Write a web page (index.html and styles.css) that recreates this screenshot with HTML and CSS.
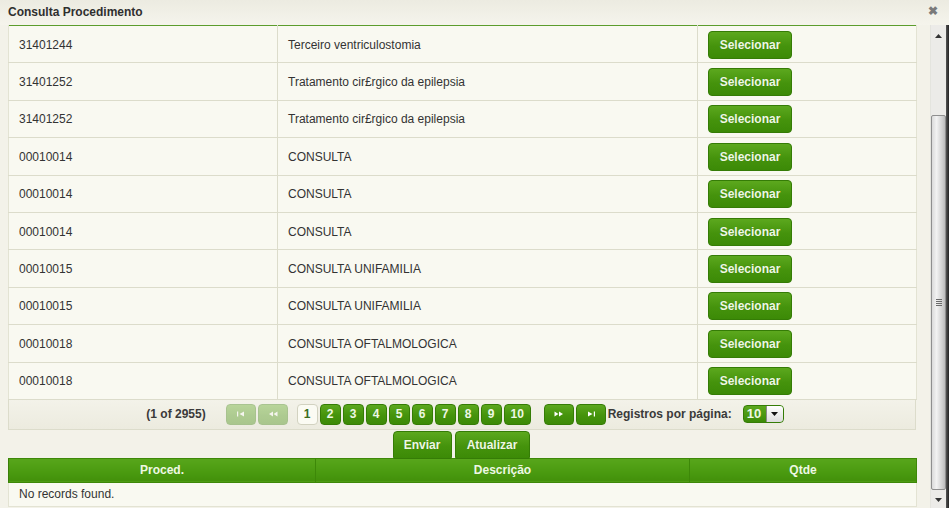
FILE: index.html
```html
<!DOCTYPE html>
<html lang="pt">
<head>
<meta charset="utf-8">
<title>Consulta Procedimento</title>
<link rel="stylesheet" href="styles.css">
</head>
<body>
<div class="dialog">
  <div class="titlebar">
    <span class="title">Consulta Procedimento</span>
    <span class="close">&#10006;</span>
  </div>
  <div class="main">
    <div class="content">
      <table class="grid">
        <colgroup><col class="c1"><col class="c2"><col class="c3"></colgroup>
        <tbody>
          <tr><td>31401244</td><td>Terceiro ventriculostomia</td><td><button class="btn sel">Selecionar</button></td></tr>
          <tr><td>31401252</td><td>Tratamento cir£rgico da epilepsia</td><td><button class="btn sel">Selecionar</button></td></tr>
          <tr><td>31401252</td><td>Tratamento cir£rgico da epilepsia</td><td><button class="btn sel">Selecionar</button></td></tr>
          <tr><td>00010014</td><td>CONSULTA</td><td><button class="btn sel">Selecionar</button></td></tr>
          <tr><td>00010014</td><td>CONSULTA</td><td><button class="btn sel">Selecionar</button></td></tr>
          <tr><td>00010014</td><td>CONSULTA</td><td><button class="btn sel">Selecionar</button></td></tr>
          <tr><td>00010015</td><td>CONSULTA UNIFAMILIA</td><td><button class="btn sel">Selecionar</button></td></tr>
          <tr><td>00010015</td><td>CONSULTA UNIFAMILIA</td><td><button class="btn sel">Selecionar</button></td></tr>
          <tr><td>00010018</td><td>CONSULTA OFTALMOLOGICA</td><td><button class="btn sel">Selecionar</button></td></tr>
          <tr><td>00010018</td><td>CONSULTA OFTALMOLOGICA</td><td><button class="btn sel">Selecionar</button></td></tr>
        </tbody>
      </table>
      <div class="paginator">
        <span class="current">(1 of 2955)</span>
        <span class="nav-group">
          <span class="pbtn nav disabled"><svg width="10" height="6" viewBox="0 0 10 6"><rect x="1" y="0.5" width="1.2" height="5" fill="#fff"/><path d="M8 0.5 L3.5 3 L8 5.5Z" fill="#fff"/></svg></span>
          <span class="pbtn nav disabled"><svg width="10" height="6" viewBox="0 0 10 6"><path d="M5 0.5 L1 3 L5 5.5Z M9.5 0.5 L5.5 3 L9.5 5.5Z" fill="#fff"/></svg></span>
        </span>
        <span class="pages">
          <span class="pbtn page active">1</span>
          <span class="pbtn page">2</span>
          <span class="pbtn page">3</span>
          <span class="pbtn page">4</span>
          <span class="pbtn page">5</span>
          <span class="pbtn page">6</span>
          <span class="pbtn page">7</span>
          <span class="pbtn page">8</span>
          <span class="pbtn page">9</span>
          <span class="pbtn page wide">10</span>
        </span>
        <span class="nav-group">
          <span class="pbtn nav"><svg width="10" height="6" viewBox="0 0 10 6"><path d="M0.5 0.5 L4.5 3 L0.5 5.5Z M5 0.5 L9 3 L5 5.5Z" fill="#fff"/></svg></span>
          <span class="pbtn nav"><svg width="10" height="6" viewBox="0 0 10 6"><path d="M2 0.5 L6.5 3 L2 5.5Z" fill="#fff"/><rect x="7.8" y="0.5" width="1.2" height="5" fill="#fff"/></svg></span>
        </span>
        <span class="rpp-label">Registros por página:</span>
        <span class="rpp"><span class="rpp-val">10</span><span class="rpp-arrow"><svg width="7" height="4" viewBox="0 0 7 4"><path d="M0 0 L7 0 L3.5 4Z" fill="#111"/></svg></span></span>
      </div>
      <div class="actions">
        <button class="btn act">Enviar</button>
        <button class="btn act">Atualizar</button>
      </div>
      <table class="grid2">
        <colgroup><col class="d1"><col class="d2"><col class="d3"></colgroup>
        <thead>
          <tr><th>Proced.</th><th>Descrição</th><th>Qtde</th></tr>
        </thead>
        <tbody>
          <tr><td colspan="3">No records found.</td></tr>
        </tbody>
      </table>
    </div>
    <div class="scrollbar">
      <div class="sb-up"><svg width="7" height="4" viewBox="0 0 7 4"><path d="M0 4 L7 4 L3.5 0Z" fill="#333"/></svg></div>
      <div class="sb-track">
        <div class="sb-thumb"><span class="grip"></span></div>
      </div>
      <div class="sb-down"><svg width="7" height="4" viewBox="0 0 7 4"><path d="M0 0 L7 0 L3.5 4Z" fill="#333"/></svg></div>
    </div>
    <div class="edge"></div>
  </div>
</div>
</body>
</html>
```

FILE: styles.css
```css
* { box-sizing: border-box; }
html, body {
  margin: 0;
  padding: 0;
  width: 949px;
  height: 508px;
  overflow: hidden;
  background: #f3f2e9;
  font-family: "Liberation Sans", Arial, sans-serif;
  font-size: 12px;
  color: #333;
}
.dialog {
  display: flex;
  flex-direction: column;
  height: 508px;
}
.titlebar {
  height: 25px;
  flex: none;
  display: flex;
  align-items: center;
  justify-content: space-between;
  padding: 0 8px 2px 8px;
  background: linear-gradient(#ecebe1, #f5f4ec);
}
.title {
  font-weight: bold;
  color: #2f2f2f;
  font-size: 12px;
}
.close {
  color: #7a7a7a;
  font-size: 12px;
  font-weight: bold;
  margin-right: 3px;
  margin-top: -2px;
}
.main {
  flex: 1;
  display: flex;
  min-height: 0;
}
.content {
  width: 930px;
  padding-left: 8px;
  flex: none;
}
.grid {
  width: 908px;
  border-collapse: collapse;
  table-layout: fixed;
  border-top: 1px solid #5c9d2c;
  background: #f9f9f1;
}
.c1 { width: 269px; }
.c2 { width: 420px; }
.c3 { width: 219px; }
.grid td {
  height: 37.4px;
  padding: 1px 10px 0 10px;
  border: 1px solid #dcdccb;
  border-top: none;
  vertical-align: middle;
  color: #333;
}
.grid td:first-child { border-left-color: #e3e3d3; }
.grid td:last-child { border-right-color: #e3e3d3; }
.btn {
  font-family: "Liberation Sans", Arial, sans-serif;
  font-size: 12px;
  font-weight: bold;
  color: #eef8e4;
  text-shadow: 0 0 1px rgba(0,0,0,0.2);
  background: linear-gradient(#5ca81e, #45930c 55%, #3c8a07);
  border: 1px solid #357c06;
  border-radius: 4px;
  padding: 0;
  cursor: pointer;
}
.sel {
  width: 84px;
  height: 28px;
  display: block;
}
.paginator {
  height: 30px;
  display: flex;
  align-items: center;
  justify-content: center;
  width: 908px;
  background: linear-gradient(#f3f2e9, #ecebdf);
  border: 1px solid #dcdccb;
  border-top: none;
  padding-left: 6px;
}
.current {
  font-weight: bold;
  color: #3a3a3a;
  margin-right: 20px;
}
.nav-group {
  display: flex;
  gap: 2px;
}
.pages {
  display: flex;
  gap: 2px;
  margin: 0 13px 0 9px;
}
.pbtn {
  height: 21px;
  display: flex;
  align-items: center;
  justify-content: center;
  border-radius: 4px;
  background: linear-gradient(#5ca81e, #45930c 55%, #3c8a07);
  border: 1px solid #357c06;
  color: #eef8e4;
  font-weight: bold;
  font-size: 12px;
}
.nav { width: 30px; }
.page { width: 21px; }
.page.wide { width: 27px; }
.page.active {
  background: #fbfbf3;
  border-color: #d2d2c0;
  color: #3c6d1c;
}
.disabled { opacity: 0.38; }
.rpp-label {
  font-weight: bold;
  color: #3a3a3a;
  margin-left: 2px;
}
.rpp {
  margin-left: 11px;
  display: flex;
  height: 18px;
  border-radius: 4px;
  overflow: hidden;
  background: linear-gradient(#5ca81e, #3c8a07);
  border: 1px solid #357c06;
}
.rpp-val {
  width: 22px;
  padding-left: 3px;
  color: #eef8e4;
  font-weight: bold;
  font-size: 13px;
  line-height: 16px;
}
.rpp-arrow {
  width: 17px;
  background: linear-gradient(#ffffff, #dcdcdc);
  border-left: 1px solid #8a8a8a;
  display: flex;
  align-items: center;
  justify-content: center;
}
.actions {
  height: 28px;
  display: flex;
  justify-content: center;
  gap: 3px;
  width: 908px;
  padding-right: 2px;
  padding-top: 1px;
}
.act {
  height: 28px;
  border-radius: 4px 4px 2px 2px;
}
.act:first-child { width: 59px; }
.act:last-child { width: 75px; }
.grid2 {
  width: 908px;
  border-collapse: collapse;
  table-layout: fixed;
}
.d1 { width: 307px; }
.d2 { width: 374px; }
.d3 { width: 227px; }
.grid2 th {
  height: 24px;
  background: linear-gradient(#58a61b, #4a9a10 60%, #42900a);
  color: #eef8e4;
  font-weight: bold;
  font-size: 12px;
  border: 1px solid #3d8808;
  border-left-color: #3a7f08;
  text-align: center;
  padding: 0;
}
.grid2 td {
  height: 24px;
  padding: 0 10px;
  background: #f9f9f1;
  border: 1px solid #e3e3d3;
  border-top: none;
  color: #333;
}
.scrollbar {
  width: 16px;
  flex: none;
  display: flex;
  flex-direction: column;
  background: #ecebe8;
  border-left: 1px solid #e4e4de;
}
.sb-up {
  height: 20px;
  display: flex;
  justify-content: center;
  padding-top: 9px;
}
.sb-track {
  flex: 1;
  padding-top: 70px;
  padding-bottom: 2px;
  display: flex;
}
.sb-thumb {
  flex: 1;
  border: 1px solid #8f8f8f;
  border-radius: 2px;
  background: linear-gradient(90deg, #dadada, #f2f2f2 35%, #cfcfcf 80%, #bcbcbc);
  display: flex;
  align-items: center;
  justify-content: center;
}
.grip {
  width: 6px;
  height: 8px;
  background: repeating-linear-gradient(#6a6a6a 0 1px, transparent 1px 2px);
}
.sb-down {
  height: 16px;
  display: flex;
  justify-content: center;
  align-items: center;
}
.edge {
  width: 3px;
  flex: none;
  background: linear-gradient(90deg, #555, #222);
}
```
